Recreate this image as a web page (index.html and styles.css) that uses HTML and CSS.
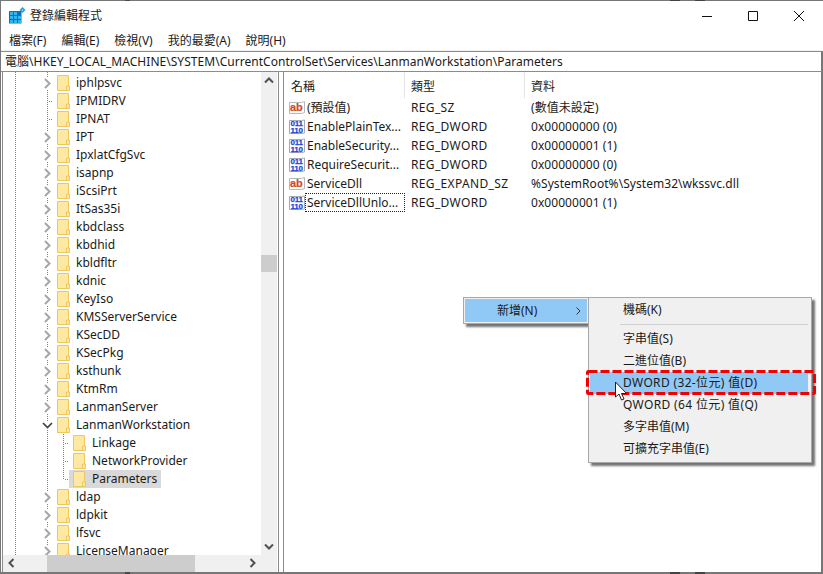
FILE: index.html
```html
<!DOCTYPE html>
<html lang="zh-Hant">
<head>
<meta charset="utf-8">
<title>登錄編輯程式</title>
<link rel="stylesheet" href="styles.css">
</head>
<body>
<svg class="defs" width="0" height="0" aria-hidden="true">
  <symbol id="folder" viewBox="0 0 13 16">
    <path d="M.5.5h11.5v11.5h1v3.500H.5z" fill="#fde7a0"/>
    <path d="M1 1h10.500v10h-2v4.500H1z" fill="#fee9a3"/>
    <path d="M.5.500h11v10.500M.5.500v15h12V11h-3v4.500" fill="none" stroke="#efc75e"/>
  </symbol>
  <symbol id="right" viewBox="0 0 11 11">
    <rect x="2" y="0" width="7" height="11" fill="#fff"/>
    <path d="M3 1l4.500 4.500L3 10" fill="none" stroke="#a6a6a6" stroke-width="2"/>
  </symbol>
  <symbol id="down" viewBox="0 0 11 11">
    <rect x="0" y="1" width="11" height="8" fill="#fff"/>
    <path d="M1 3l4.500 4.500L10 3" fill="none" stroke="#404040" stroke-width="1.700"/>
  </symbol>
</svg>
<div class="window">
  <header class="titlebar">
    <svg class="app-icon" width="17" height="17" viewBox="0 0 17 17" aria-hidden="true">
      <path d="M0 4h12.500v12.500H0z" fill="#0f6fb8"/>
      <path d="M1 5h3v3H1zM5 5h3v3H5zM1 9h3v3H1zM5 9h3v3H5zM9 9h3v3H9zM1 13h3v3H1zM5 13h3v3H5zM9 13h3v3H9z" fill="#33b6f0"/>
      <path d="M13.500 0l3 3-3 3-3-3z" fill="#2a9ad8"/>
      <path d="M13.500 2l1 1-1 1-1-1z" fill="#9fe0fa"/>
    </svg>
    <span class="title-text">登錄編輯程式</span>
    <div class="caption">
      <span class="cap-btn"><svg width="12" height="12" viewBox="0 0 12 12"><path d="M1 6.500h10" stroke="#111" fill="none"/></svg></span>
      <span class="cap-btn"><svg width="12" height="12" viewBox="0 0 12 12"><path d="M1.500 1.500h9v9h-9z" stroke="#111" fill="none"/></svg></span>
      <span class="cap-btn"><svg width="12" height="12" viewBox="0 0 12 12"><path d="M1 1l10 10M11 1L1 11" stroke="#111" fill="none"/></svg></span>
    </div>
  </header>
  <nav class="menubar">
    <span class="menu-item">檔案(F)</span>
    <span class="menu-item">編輯(E)</span>
    <span class="menu-item">檢視(V)</span>
    <span class="menu-item">我的最愛(A)</span>
    <span class="menu-item">說明(H)</span>
  </nav>
  <div class="address">電腦\HKEY_LOCAL_MACHINE\SYSTEM\CurrentControlSet\Services\LanmanWorkstation\Parameters</div>
  <main class="panes">
    <section class="tree-pane">
      <div class="tree">
        <div class="row"><span class="twist"><svg width="11" height="11"><use href="#right"/></svg></span><span class="node"><svg class="folder" width="13" height="16"><use href="#folder"/></svg><span>iphlpsvc</span></span></div>
        <div class="row"><span class="twist leaf"></span><span class="node"><svg class="folder" width="13" height="16"><use href="#folder"/></svg><span>IPMIDRV</span></span></div>
        <div class="row"><span class="twist leaf"></span><span class="node"><svg class="folder" width="13" height="16"><use href="#folder"/></svg><span>IPNAT</span></span></div>
        <div class="row"><span class="twist"><svg width="11" height="11"><use href="#right"/></svg></span><span class="node"><svg class="folder" width="13" height="16"><use href="#folder"/></svg><span>IPT</span></span></div>
        <div class="row"><span class="twist"><svg width="11" height="11"><use href="#right"/></svg></span><span class="node"><svg class="folder" width="13" height="16"><use href="#folder"/></svg><span>IpxlatCfgSvc</span></span></div>
        <div class="row"><span class="twist"><svg width="11" height="11"><use href="#right"/></svg></span><span class="node"><svg class="folder" width="13" height="16"><use href="#folder"/></svg><span>isapnp</span></span></div>
        <div class="row"><span class="twist"><svg width="11" height="11"><use href="#right"/></svg></span><span class="node"><svg class="folder" width="13" height="16"><use href="#folder"/></svg><span>iScsiPrt</span></span></div>
        <div class="row"><span class="twist"><svg width="11" height="11"><use href="#right"/></svg></span><span class="node"><svg class="folder" width="13" height="16"><use href="#folder"/></svg><span>ItSas35i</span></span></div>
        <div class="row"><span class="twist"><svg width="11" height="11"><use href="#right"/></svg></span><span class="node"><svg class="folder" width="13" height="16"><use href="#folder"/></svg><span>kbdclass</span></span></div>
        <div class="row"><span class="twist"><svg width="11" height="11"><use href="#right"/></svg></span><span class="node"><svg class="folder" width="13" height="16"><use href="#folder"/></svg><span>kbdhid</span></span></div>
        <div class="row"><span class="twist"><svg width="11" height="11"><use href="#right"/></svg></span><span class="node"><svg class="folder" width="13" height="16"><use href="#folder"/></svg><span>kbldfltr</span></span></div>
        <div class="row"><span class="twist"><svg width="11" height="11"><use href="#right"/></svg></span><span class="node"><svg class="folder" width="13" height="16"><use href="#folder"/></svg><span>kdnic</span></span></div>
        <div class="row"><span class="twist"><svg width="11" height="11"><use href="#right"/></svg></span><span class="node"><svg class="folder" width="13" height="16"><use href="#folder"/></svg><span>KeyIso</span></span></div>
        <div class="row"><span class="twist"><svg width="11" height="11"><use href="#right"/></svg></span><span class="node"><svg class="folder" width="13" height="16"><use href="#folder"/></svg><span>KMSServerService</span></span></div>
        <div class="row"><span class="twist"><svg width="11" height="11"><use href="#right"/></svg></span><span class="node"><svg class="folder" width="13" height="16"><use href="#folder"/></svg><span>KSecDD</span></span></div>
        <div class="row"><span class="twist"><svg width="11" height="11"><use href="#right"/></svg></span><span class="node"><svg class="folder" width="13" height="16"><use href="#folder"/></svg><span>KSecPkg</span></span></div>
        <div class="row"><span class="twist"><svg width="11" height="11"><use href="#right"/></svg></span><span class="node"><svg class="folder" width="13" height="16"><use href="#folder"/></svg><span>ksthunk</span></span></div>
        <div class="row"><span class="twist"><svg width="11" height="11"><use href="#right"/></svg></span><span class="node"><svg class="folder" width="13" height="16"><use href="#folder"/></svg><span>KtmRm</span></span></div>
        <div class="row"><span class="twist"><svg width="11" height="11"><use href="#right"/></svg></span><span class="node"><svg class="folder" width="13" height="16"><use href="#folder"/></svg><span>LanmanServer</span></span></div>
        <div class="row"><span class="twist"><svg width="11" height="11"><use href="#down"/></svg></span><span class="node"><svg class="folder" width="13" height="16"><use href="#folder"/></svg><span>LanmanWorkstation</span></span></div>
        <div class="row child"><span class="twist branch"></span><span class="node"><svg class="folder" width="13" height="16"><use href="#folder"/></svg><span>Linkage</span></span></div>
        <div class="row child"><span class="twist branch"></span><span class="node"><svg class="folder" width="13" height="16"><use href="#folder"/></svg><span>NetworkProvider</span></span></div>
        <div class="row child"><span class="twist branch last"></span><span class="node selected"><svg class="folder" width="13" height="16"><use href="#folder"/></svg><span>Parameters</span></span></div>
        <div class="row"><span class="twist"><svg width="11" height="11"><use href="#right"/></svg></span><span class="node"><svg class="folder" width="13" height="16"><use href="#folder"/></svg><span>ldap</span></span></div>
        <div class="row"><span class="twist"><svg width="11" height="11"><use href="#right"/></svg></span><span class="node"><svg class="folder" width="13" height="16"><use href="#folder"/></svg><span>ldpkit</span></span></div>
        <div class="row"><span class="twist"><svg width="11" height="11"><use href="#right"/></svg></span><span class="node"><svg class="folder" width="13" height="16"><use href="#folder"/></svg><span>lfsvc</span></span></div>
        <div class="row"><span class="twist"><svg width="11" height="11"><use href="#right"/></svg></span><span class="node"><svg class="folder" width="13" height="16"><use href="#folder"/></svg><span>LicenseManager</span></span></div>
      </div>
      <div class="vscroll">
        <svg class="arrow" width="16" height="17" viewBox="0 0 16 17"><path d="M4 10.500l4-4 4 4" class="arrow-line"/></svg>
        <div class="vtrack"><div class="vthumb"></div></div>
        <svg class="arrow" width="16" height="17" viewBox="0 0 16 17"><path d="M4 6.500l4 4 4-4" class="arrow-line"/></svg>
      </div>
      <div class="hscroll">
        <svg class="arrow" width="17" height="16" viewBox="0 0 17 16"><path d="M10.500 4l-4 4 4 4" class="arrow-line"/></svg>
        <div class="htrack"><div class="hthumb"></div></div>
        <svg class="arrow" width="17" height="16" viewBox="0 0 17 16"><path d="M6.500 4l4 4-4 4" class="arrow-line"/></svg>
      </div>
      <div class="corner"></div>
    </section>
    <section class="list-pane">
      <div class="list-head">
        <span class="col col-name">名稱</span>
        <span class="col col-type">類型</span>
        <span class="col col-data">資料</span>
      </div>
      <div class="list-row"><span class="cell-name"><svg width="16" height="16" viewBox="0 0 16 16"><path class="ab-page" d="M.5 2.500h12l3-1v11l-3 1H.5z"/><text x="1" y="10.500" class="ab-text">ab</text></svg><span class="name-label">(預設值)</span></span><span class="cell-type">REG_SZ</span><span class="cell-data">(數值未設定)</span></div>
      <div class="list-row"><span class="cell-name"><svg width="16" height="16" viewBox="0 0 16 16"><path class="bin-page" d="M.5 1.500h12l3-.5v13l-3 .5H.5z"/><text x="1.500" y="7" class="bin-text">011</text><text x="1.500" y="13.500" class="bin-text">110</text></svg><span class="name-label">EnablePlainTex...</span></span><span class="cell-type">REG_DWORD</span><span class="cell-data">0x00000000 (0)</span></div>
      <div class="list-row"><span class="cell-name"><svg width="16" height="16" viewBox="0 0 16 16"><path class="bin-page" d="M.5 1.500h12l3-.5v13l-3 .5H.5z"/><text x="1.500" y="7" class="bin-text">011</text><text x="1.500" y="13.500" class="bin-text">110</text></svg><span class="name-label">EnableSecurity...</span></span><span class="cell-type">REG_DWORD</span><span class="cell-data">0x00000001 (1)</span></div>
      <div class="list-row"><span class="cell-name"><svg width="16" height="16" viewBox="0 0 16 16"><path class="bin-page" d="M.5 1.500h12l3-.5v13l-3 .5H.5z"/><text x="1.500" y="7" class="bin-text">011</text><text x="1.500" y="13.500" class="bin-text">110</text></svg><span class="name-label">RequireSecurit...</span></span><span class="cell-type">REG_DWORD</span><span class="cell-data">0x00000000 (0)</span></div>
      <div class="list-row"><span class="cell-name"><svg width="16" height="16" viewBox="0 0 16 16"><path class="ab-page" d="M.5 2.500h12l3-1v11l-3 1H.5z"/><text x="1" y="10.500" class="ab-text">ab</text></svg><span class="name-label">ServiceDll</span></span><span class="cell-type">REG_EXPAND_SZ</span><span class="cell-data">%SystemRoot%\System32\wkssvc.dll</span></div>
      <div class="list-row"><span class="cell-name"><svg width="16" height="16" viewBox="0 0 16 16"><path class="bin-page" d="M.5 1.500h12l3-.5v13l-3 .5H.5z"/><text x="1.500" y="7" class="bin-text">011</text><text x="1.500" y="13.500" class="bin-text">110</text></svg><span class="name-label focus">ServiceDllUnlo...</span></span><span class="cell-type">REG_DWORD</span><span class="cell-data">0x00000001 (1)</span></div>
    </section>
  </main>
</div>

<div class="ctx ctx-parent">
  <div class="ctx-parent-item"><span>新增(N)</span><svg width="7" height="10" viewBox="0 0 7 10"><path d="M1.500 1.500l3.500 3.500-3.500 3.500" fill="none" stroke="#333"/></svg></div>
</div>
<div class="ctx ctx-sub">
  <div class="ctx-item">機碼(K)</div>
  <div class="ctx-sep"></div>
  <div class="ctx-item">字串值(S)</div>
  <div class="ctx-item">二進位值(B)</div>
  <div class="ctx-item hot wide">DWORD (32-位元) 值(D)</div>
  <div class="ctx-item wide">QWORD (64 位元) 值(Q)</div>
  <div class="ctx-item">多字串值(M)</div>
  <div class="ctx-item">可擴充字串值(E)</div>
</div>
<svg class="callout" width="230" height="25" viewBox="0 0 230 25" aria-hidden="true">
  <rect x="1.500" y="1.500" width="227" height="22" rx="1" fill="none" stroke="#f00000" stroke-width="3" stroke-dasharray="9 3"/>
</svg>
<svg class="cursor" width="14" height="21" viewBox="0 0 14 21" aria-hidden="true">
  <path d="M1.500 1v15l3.500-3 2.500 6 2.500-1-2.500-5.500h5z" fill="#fff" stroke="#222" stroke-width="1"/>
</svg>
</body>
</html>
```

FILE: styles.css
```css
* { box-sizing: border-box; }
html, body { margin: 0; padding: 0; }
body {
  width: 823px;
  height: 574px;
  overflow: hidden;
  position: relative;
  background: linear-gradient(90deg, #777 0 125px, #4a4a4a 125px 130px, #777 130px 670px, #444 670px 680px, #777 680px 695px, #444 695px 705px, #777 705px);
  font: 12px/16px "Noto Sans", "Noto Sans CJK TC", sans-serif;
  color: #1a1a1a;
}
.defs { position: absolute; }
.ab-page { fill: #fff; stroke: #b8b8b8; }
.bin-page { fill: #fff; stroke: #a8a8b8; }
.ab-text { font: bold 11px "Liberation Sans", sans-serif; fill: #d2491f; stroke: #d2491f; stroke-width: .2px; }
.bin-text { font: bold 8px "Liberation Sans", sans-serif; fill: #1c46d8; stroke: #1c46d8; stroke-width: .25px; letter-spacing: -.2px; }

.window {
  width: 822px;
  height: 571px;
  margin: 1px 0 0 1px;
  background: #fff;
  display: flex;
  flex-direction: column;
}
.titlebar {
  height: 30px;
  flex: none;
  display: flex;
  align-items: center;
  padding-left: 8px;
}
.app-icon { flex: none; margin-right: 4px; margin-top: -2px; }
.caption { margin-left: auto; margin-top: -1px; display: flex; padding-right: 1px; }
.cap-btn { width: 46px; height: 30px; display: flex; align-items: center; justify-content: center; }

.menubar {
  height: 20px;
  flex: none;
  display: flex;
  align-items: center;
  padding: 1px 0 0 8px;
  border-bottom: 1px solid #f0f0f0;
}
.menu-item { margin-right: 15px; }

.address {
  height: 21px;
  flex: none;
  border-top: 1px solid #8c8c8c;
  border-bottom: 1px solid #8c8c8c;
  border-right: 2px solid #777;
  padding-left: 4px;
  line-height: 20px;
  letter-spacing: .035px;
  white-space: nowrap;
}

.panes {
  flex: 1;
  min-height: 0;
  display: flex;
  border-right: 2px solid #777;
}
.tree-pane {
  width: 277px;
  flex: none;
  margin-left: 1px;
  border-left: 1px solid #8c8c8c;
  border-right: 1px solid #8c8c8c;
  display: grid;
  grid-template-columns: 258px 16px 1px;
  grid-template-rows: 483px 17px;
}
.tree {
  overflow: hidden;
  padding-top: 2px;
  background-color: #fff;
  background-image:
    linear-gradient(#808080 50%, transparent 50%),
    linear-gradient(#808080 50%, transparent 50%);
  background-size: 1px 2px, 1px 2px;
  background-position: 12px 0, 44px 0;
  background-repeat: repeat-y;
}
.row { height: 18px; display: flex; padding-left: 39px; }
.row.child { padding-left: 55px; }
.twist {
  width: 11px;
  height: 18px;
  flex: none;
  display: flex;
  align-items: center;
}
.twist.leaf {
  background-image: repeating-linear-gradient(90deg, #808080 0 1px, transparent 1px 2px);
  background-size: 6px 1px;
  background-position: 7px 9px;
  background-repeat: no-repeat;
}
.twist.branch {
  background-image:
    repeating-linear-gradient(90deg, #808080 0 1px, transparent 1px 2px),
    repeating-linear-gradient(#808080 0 1px, transparent 1px 2px);
  background-size: 6px 1px, 1px 18px;
  background-position: 7px 9px, 5px 0;
  background-repeat: no-repeat;
}
.twist.branch.last { background-size: 6px 1px, 1px 10px; }
.node {
  height: 18px;
  display: flex;
  align-items: center;
  padding: 0 4px;
  white-space: nowrap;
}
.node.selected { background: #d9d9d9; }
.folder { flex: none; margin-right: 6px; }

.vscroll, .hscroll, .corner { background: #f0f0f0; }
.vscroll { grid-column: 2; grid-row: 1; display: flex; flex-direction: column; }
.corner { grid-column: 2; grid-row: 2; }
.hscroll { grid-column: 1; grid-row: 2; display: flex; }
.arrow { flex: none; display: block; }
.arrow-line { fill: none; stroke: #505050; stroke-width: 2; }
.vtrack { flex: 1; padding-top: 166px; }
.vthumb { height: 17px; background: #cdcdcd; }
.htrack { flex: 1; padding-left: 27px; }
.hthumb { width: 148px; height: 100%; background: #cdcdcd; }

.list-pane {
  flex: 1;
  margin-left: 4px;
  border-left: 1px solid #8c8c8c;
}
.list-head { height: 26px; display: flex; }
.col { height: 26px; line-height: 29px; border-right: 1px solid #e5e5e5; }
.col-name { width: 121px; padding-left: 7px; }
.col-type { width: 120px; padding-left: 6px; }
.col-data { flex: 1; padding-left: 6px; border-right: 0; }
.list-row { height: 19px; display: flex; white-space: nowrap; }
.cell-name { width: 121px; padding-left: 5px; display: flex; align-items: center; }
.name-label { flex: 1; height: 19px; line-height: 19px; padding-left: 2px; }
.name-label.focus { outline: 1px dotted #222; outline-offset: -1px; }
.cell-type { width: 120px; padding-left: 6px; line-height: 20px; letter-spacing: .35px; }
.cell-data { flex: 1; padding-left: 6px; line-height: 20px; letter-spacing: .05px; }
.list-row .name-label { line-height: 20px; }

.ctx {
  position: absolute;
  background: #f0f0f0;
  border: 1px solid #a8a8a8;
  box-shadow: 3px 3px 2px rgba(0, 0, 0, .55);
}
.ctx-parent { left: 463px; top: 297px; width: 126px; height: 27px; padding: 1px; }
.ctx-parent-item {
  height: 23px;
  background: #90c8f6;
  display: flex;
  align-items: center;
  justify-content: space-between;
  padding: 0 5px 0 32px;
}
.ctx-sub { left: 588px; top: 297px; width: 224px; height: 166px; padding: 1px 3px 0 1px; }
.ctx-item { height: 22px; line-height: 22px; padding-left: 33px; white-space: nowrap; }
.ctx-item.wide { letter-spacing: .35px; }
.ctx-item.hot { background: #90c8f6; }
.ctx-sep { margin: 3px 0 3px 30px; height: 1px; background: #d0d0d0; }
.callout { position: absolute; left: 586px; top: 370px; }
.cursor { position: absolute; left: 614px; top: 381px; }
```
